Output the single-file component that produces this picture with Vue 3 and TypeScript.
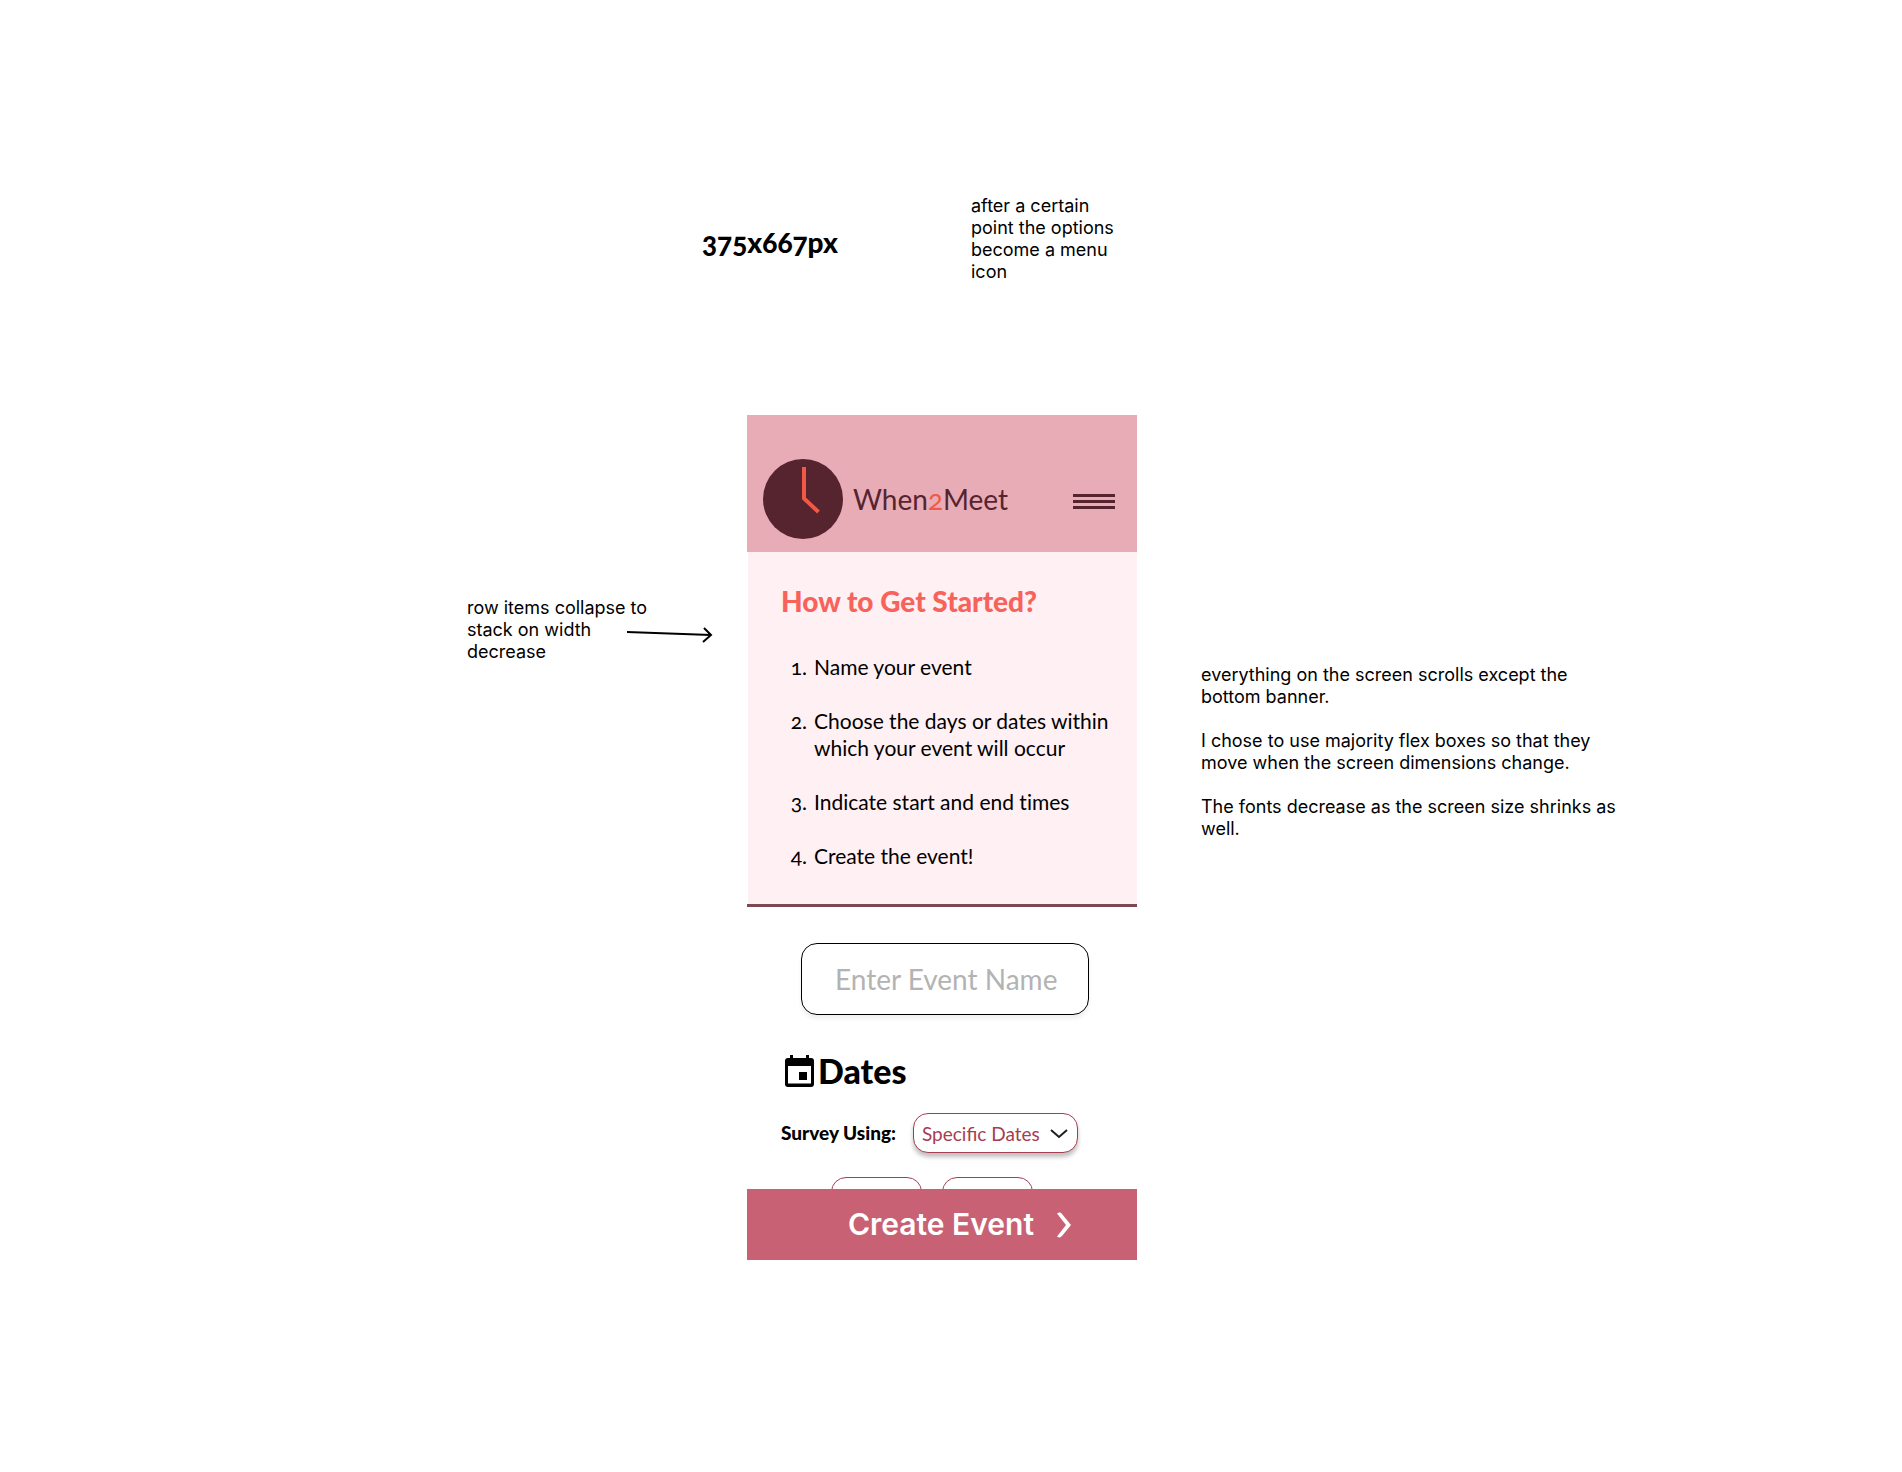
<script setup lang="ts">
import { ref } from 'vue'

const eventName = ref('')
const surveyType = ref('Specific Dates')
const steps: string[] = [
  'Name your event',
  'Choose the days or dates within which your event will occur',
  'Indicate start and end times',
  'Create the event!',
]
</script>

<template>
  <main class="board">
    <header class="board-top">
      <h1 class="size-label">375x667px</h1>
      <p class="note note-menu">after a certain point the options become a menu icon</p>
    </header>

    <div class="board-body">
      <aside class="left">
        <div class="note note-rows">
          row items collapse to stack on width decrease
          <svg class="arrow" width="88" height="18" viewBox="0 0 88 18" fill="none" stroke="#000" stroke-width="2">
            <path d="M0 6 L84 9 M77 2 L84 9 L76 16" />
          </svg>
        </div>
      </aside>

      <section class="phone">
        <header class="bar">
          <svg class="clock" width="80" height="80" viewBox="0 0 80 80">
            <circle cx="40" cy="40" r="40" fill="#56242f" />
            <path d="M41 8 V39.500 L55.500 53" fill="none" stroke="#f15946" stroke-width="4" />
          </svg>
          <span class="brand">When<span class="two">2</span>Meet</span>
          <button class="menu" type="button" aria-label="Menu"><i></i><i></i><i></i></button>
        </header>

        <section class="intro">
          <h2>How to Get Started?</h2>
          <ol>
            <li v-for="(step, i) in steps" :key="step">
              <span class="num">{{ i + 1 }}.</span><span>{{ step }}</span>
            </li>
          </ol>
        </section>

        <form class="form" @submit.prevent>
          <input v-model="eventName" class="name" type="text" placeholder="Enter Event Name" aria-label="Event name" />
          <h2 class="dates">
            <svg width="29" height="32" viewBox="0 0 29 32">
              <path
                fill="#000"
                fill-rule="evenodd"
                d="M5 0h3v3h13V0h3v3h2a3 3 0 0 1 3 3v23a3 3 0 0 1-3 3H3a3 3 0 0 1-3-3V6a3 3 0 0 1 3-3h2zM3 11v17.500h23V11zM14 17h8v8h-8z"
              />
            </svg>
            <span>Dates</span>
          </h2>
          <div class="survey">
            <label for="survey">Survey Using:</label>
            <span class="picker">
              <select id="survey" v-model="surveyType">
                <option>Specific Dates</option>
              </select>
              <svg width="18" height="10" viewBox="0 0 18 10" fill="none" stroke="#1e1e1e" stroke-width="2">
                <path d="M1 1 L9 8 L17 1" />
              </svg>
            </span>
          </div>
          <div class="peek">
            <button type="button" aria-label="First date"></button>
            <button type="button" aria-label="Second date"></button>
          </div>
        </form>

        <button class="create" type="button">
          <span>Create Event</span>
          <svg width="16" height="26" viewBox="0 0 16 26">
            <path d="M1 1.500 Q4 -0.500 6 2 L15 13 L6 24 Q4 26.500 1 24.500 L10 13 Z" fill="#fff" />
          </svg>
        </button>
      </section>

      <aside class="right note">
        <p>everything on the screen scrolls except the bottom banner.</p>
        <p>I chose to use majority flex boxes so that they move when the screen dimensions change.</p>
        <p>The fonts decrease as the screen size shrinks as well.</p>
      </aside>
    </div>
  </main>
</template>

<style>
body {
  margin: 0;
  background: #fff;
}
</style>

<style scoped>
.board {
  padding: 195px 0 212px;
  font-family: Lato, 'Open Sans', sans-serif;
  font-variant-numeric: oldstyle-nums;
  font-variant-ligatures: no-common-ligatures;
  color: #000;
}
.board * {
  box-sizing: border-box;
}
h1,
h2,
p,
ol {
  margin: 0;
  padding: 0;
}
button,
input,
select {
  font-family: inherit;
  margin: 0;
}
svg {
  display: block;
  flex: none;
}
.note {
  font: 400 18px/22px Inter, sans-serif;
}
.board-top {
  display: grid;
  grid-template-columns: 702fr 269px 931fr;
  margin-bottom: 132px;
}
.size-label {
  grid-column: 2;
  padding-top: 30px;
  font-size: 28px;
  line-height: 34px;
  font-weight: 900;
}
.note-menu {
  width: 160px;
}
.board-body {
  display: grid;
  grid-template-columns: 747fr 390px 765fr;
}
.left {
  display: flex;
  justify-content: flex-end;
  align-items: flex-start;
  padding: 182px 90px 0 0;
}
.note-rows {
  position: relative;
  width: 190px;
}
.arrow {
  position: absolute;
  left: 160px;
  top: 29px;
}
.right {
  display: flex;
  flex-direction: column;
  gap: 22px;
  width: 430px;
  margin-left: 64px;
  padding-top: 249px;
}
.phone {
  display: flex;
  flex-direction: column;
}
.bar {
  display: flex;
  align-items: center;
  padding: 44px 22px 13px 16px;
  background: #e8acb7;
}
.brand {
  margin-left: 10px;
  font-size: 28px;
  line-height: 38px;
  color: #56242f;
}
.two {
  color: #f15946;
}
.menu {
  display: flex;
  flex-direction: column;
  gap: 3px;
  width: 42px;
  margin-left: auto;
  margin-top: 5px;
  padding: 0;
  border: 0;
  background: none;
}
.menu i {
  height: 3px;
  background: #56242f;
}
.intro {
  margin-left: 1px;
  padding: 31px 24px 35px 33px;
  background: #fff0f3;
}
.intro h2 {
  font-size: 28px;
  line-height: 36px;
  font-weight: 900;
  color: #f7625b;
}
ol {
  display: flex;
  flex-direction: column;
  gap: 27px;
  margin-top: 34px;
  list-style: none;
  font-size: 21px;
  line-height: 27px;
}
li {
  display: flex;
}
.num {
  flex: none;
  width: 26px;
  margin-right: 7px;
  text-align: right;
}
.form {
  display: flex;
  flex-direction: column;
  padding: 36px 34px 0;
  border-top: 3px solid #7b4854;
}
.name {
  align-self: center;
  width: 288px;
  height: 72px;
  margin-left: 6px;
  padding: 0 24px 0 33px;
  border: 1px solid #000;
  border-radius: 16px;
  background: #fff;
  box-shadow: 0 4px 4px rgba(0, 0, 0, 0.06);
  font-size: 28px;
}
.name::placeholder {
  color: #b3b3b3;
  opacity: 1;
}
.dates {
  display: flex;
  align-items: center;
  gap: 4px;
  margin-top: 34px;
  padding-left: 4px;
  font-size: 34px;
  line-height: 44px;
  font-weight: 900;
}
.survey {
  display: flex;
  align-items: center;
  justify-content: space-between;
  margin-top: 20px;
  padding-right: 25px;
}
.survey label {
  font-size: 19px;
  line-height: 24px;
  font-weight: 900;
}
.picker {
  position: relative;
}
.picker select {
  display: block;
  width: 165px;
  height: 40px;
  padding: 0 30px 0 8px;
  appearance: none;
  border: 1px solid #a63d50;
  border-radius: 15px;
  background: #fff;
  box-shadow: 0 4px 4px rgba(0, 0, 0, 0.25);
  font-size: 19px;
  color: #a63d50;
}
.picker svg {
  position: absolute;
  right: 10px;
  top: 16px;
  pointer-events: none;
}
.peek {
  display: flex;
  gap: 20px;
  height: 12px;
  margin-top: 24px;
  padding-left: 50px;
  overflow: hidden;
}
.peek button {
  width: 91px;
  height: 40px;
  border: 1px solid #a63d50;
  border-radius: 15px;
  background: #fff;
}
.create {
  display: flex;
  align-items: center;
  justify-content: flex-end;
  gap: 22px;
  padding: 17px 65px 17px 0;
  border: 0;
  background: #c96174;
  color: #fff;
  font: 600 30px/37px Inter, sans-serif;
}
</style>
